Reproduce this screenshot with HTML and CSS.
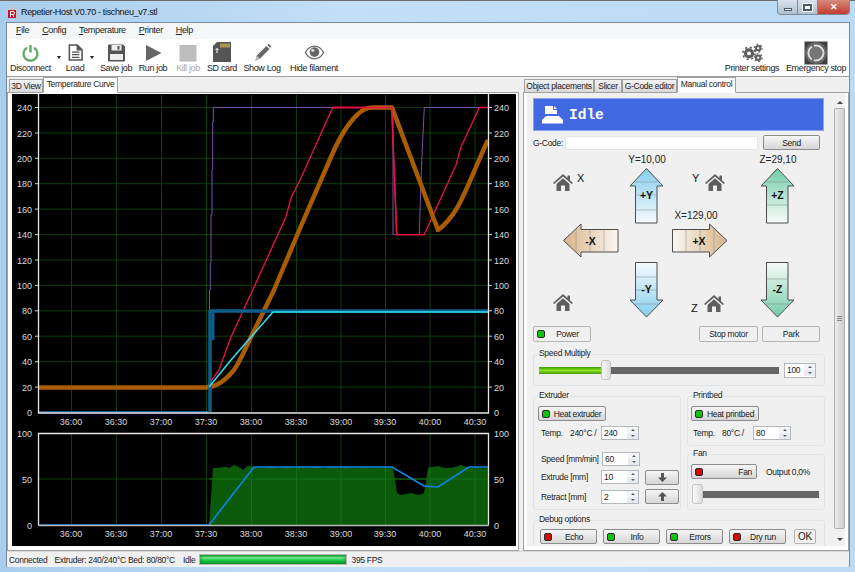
FILE: index.html
```html
<!DOCTYPE html>
<html lang="en">
<head>
    <meta charset="UTF-8">
    <meta name="viewport" content="width=device-width, initial-scale=1.0">
    <title>Repetier-Host V0.70 - tischneu_v7.stl</title>
    <link rel="stylesheet" href="styles.css">
</head>
<body>
<div class="window">
    <!-- title bar -->
    <div class="titlebar">
        <svg class="app-icon" width="12" height="12" viewBox="0 0 12 12"><path d="M6 0 L9 3 L11 3 L11 12 L1 12 L1 3 L3 3 Z" fill="#c9c9c9"/><rect x="2" y="4" width="8" height="8" fill="#c8102e"/><path d="M4.5 11V5.500h2.500a1.300 1.300 0 0 1 0 3h-2.500M6.800 8.500L8 11" fill="none" stroke="#fff" stroke-width="1"/></svg>
        <span class="title-text">Repetier-Host V0.70 - tischneu_v7.stl</span>
        <div class="win-buttons">
            <span class="win-btn win-min"><i></i></span>
            <span class="win-btn win-max"><i></i></span>
            <span class="win-btn win-close">✕</span>
        </div>
    </div>

    <div class="client">
        <div class="menubar">
            <span><u>F</u>ile</span>
            <span><u>C</u>onfig</span>
            <span><u>T</u>emperature</span>
            <span><u>P</u>rinter</span>
            <span><u>H</u>elp</span>
        </div>

        <div class="toolbar">
            <div class="tools-left">
                <div class="tool">
                    <svg class="ico-s" viewBox="0 0 24 24"><path d="M8 6.500 A8 8 0 1 0 16 6.500" fill="none" stroke="#5cae62" stroke-width="2.600"/><path d="M12 3.500V12" stroke="#5cae62" stroke-width="2.800"/></svg>
                    <span>Disconnect</span>
                    <b class="drop drop-a"></b>
                </div>
                <div class="tool">
                    <svg class="ico-s" viewBox="0 0 24 24"><path d="M5 3.500H14L19.500 9V20.500H5Z" fill="#fff" stroke="#555" stroke-width="1.800"/><path d="M14 3.500V9H19.500" fill="#555" stroke="#555" stroke-width="1.500"/><path d="M8 11.500H16.500M8 14.500H16.500M8 17.500H16.500" stroke="#555" stroke-width="1.400"/></svg>
                    <span>Load</span>
                    <b class="drop drop-b"></b>
                </div>
                <div class="tool">
                    <svg width="24" height="24" viewBox="0 0 24 24"><path d="M4.500 4H19L20.500 5.500V20H4.500Z" fill="#555" stroke="#555" stroke-linejoin="round"/><rect x="7.500" y="4" width="10" height="5.500" fill="#eee"/><rect x="13.500" y="5" width="2" height="3.500" fill="#555"/><rect x="6" y="13" width="13" height="6" fill="#eee"/></svg>
                    <span>Save job</span>
                </div>
                <div class="tool">
                    <svg width="24" height="24" viewBox="0 0 24 24"><path d="M5 4L20.500 12L5 20Z" fill="#666"/></svg>
                    <span>Run job</span>
                </div>
                <div class="tool tool-off">
                    <svg width="24" height="24" viewBox="0 0 24 24"><rect x="3.500" y="4" width="17" height="16.500" fill="#bdbdbd"/></svg>
                    <span>Kill job</span>
                </div>
                <div class="tool">
                    <svg width="24" height="24" viewBox="0 0 24 24"><path d="M7 1H21V21H3V5Z" fill="#555"/><path d="M11 2.500V6.500M13 2.500V6.500M15 2.500V6.500M17 2.500V6.500M19 2.500V6.500" stroke="#e2c24c" stroke-width="1.200"/><path d="M7 12V7.500M5.500 9L7 7.500L8.500 9" stroke="#fff" fill="none"/></svg>
                    <span>SD card</span>
                </div>
                <div class="tool">
                    <svg class="ico-s" viewBox="0 0 24 24"><path d="M4 21L5.500 15.500L16.500 4.500L20 8L9 19Z" fill="#666"/><path d="M17.500 3.500L19 2L22 5L20.500 6.500Z" fill="#666"/><path d="M4 21L5.500 15.500L9 19Z" fill="#bbb"/></svg>
                    <span>Show Log</span>
                </div>
                <div class="tool">
                    <svg class="ico-s" viewBox="0 0 24 24"><path d="M1.500 12C5 6 9 4.800 12 4.800S19 6 22.500 12C19 18 15 19.200 12 19.200S5 18 1.500 12Z" fill="#fff" stroke="#666" stroke-width="1.500"/><circle cx="12" cy="11.500" r="5.500" fill="#666"/><circle cx="10" cy="9.500" r="1.800" fill="#ddd"/></svg>
                    <span>Hide filament</span>
                </div>
            </div>
            <div class="tools-right">
                <div class="tool">
                    <svg class="ico-s" viewBox="0 0 24 24"><g fill="none" stroke="#5d5d5d"><circle cx="8" cy="13" r="4" stroke-width="3.600"/><circle cx="8" cy="13" r="7" stroke-width="1.800" stroke-dasharray="2.500 3"/><circle cx="18.500" cy="7" r="2.500" stroke-width="2.400"/><circle cx="18.500" cy="7" r="4.500" stroke-width="1.400" stroke-dasharray="2 2.700"/><circle cx="18.500" cy="18" r="2.500" stroke-width="2.400"/><circle cx="18.500" cy="18" r="4.500" stroke-width="1.400" stroke-dasharray="2 2.700"/></g></svg>
                    <span>Printer settings</span>
                </div>
                <div class="tool">
                    <svg width="24" height="24" viewBox="0 0 24 24"><rect x="0.500" y="0.500" width="23" height="23" fill="#3f3f3f"/><circle cx="12" cy="12" r="11" fill="#666"/><circle cx="12" cy="12" r="7.500" fill="none" stroke="#ddd" stroke-width="2" stroke-dasharray="14 2 15 2"/><circle cx="12" cy="12" r="6" fill="#777"/></svg>
                    <span>Emergency stop</span>
                </div>
            </div>
        </div>

        <div class="main">
            <!-- left: temperature curve -->
            <div class="left-pane">
                <div class="tabs tabs-left">
                    <span class="tab">3D View</span>
                    <span class="tab active">Temperature Curve</span>
                </div>
                <div class="tab-page curve-page">
                    <svg class="curve" width="504" height="452" viewBox="11 94 504 452">
                        <rect x="11" y="94" width="504" height="452" fill="#000"/>
                        <defs>
                            <clipPath id="topPlot"><rect x="38" y="95" width="449" height="318"/></clipPath>
                        </defs>
                        <!-- grid -->
                        <path class="grid" d="M38 107.500H487M38 133H487M38 158.300H487M38 183.700H487M38 209.100H487M38 234.600H487M38 260H487M38 285.400H487M38 310.800H487M38 336.200H487M38 361.700H487M38 387.100H487"/>
                        <path class="grid" d="M70.500 95V412M115.500 95V412M160.500 95V412M205.500 95V412M250.500 95V412M295.500 95V412M340 95V412M384.500 95V412M429 95V412M474 95V412"/>
                        <g clip-path="url(#topPlot)" fill="none" stroke-linejoin="round">
                            <path stroke="#7a52a8" stroke-width="1" d="M208.500 412V290H209.300V262.700H210V215H211V169H211.700V122H212.300V107.500H392V234.600H418.300L420 180L421.700 140L423.300 107.500H487"/>
                            <path stroke="#1d78b4" stroke-width="1.500" d="M38 412H207"/>
                            <path stroke="#f01048" stroke-width="1.300" d="M206 386.500L218 370L230 337L251.700 290L285 216.700L290 198L300 178L331.700 107.500H390.700L393.300 173L395.700 234.600H423.300L455 165L460 147L478.300 107.500H487"/>
                            <path stroke="#a95c00" stroke-width="4.500" d="M38 387.500H204C214 387.500 224 381 233 370C240 360 245 347 250 337L273 290L300 226L330 157C336 143 345 125 357 114C362 109 366 107.500 372 107.500H391L437 230C444 225 450 218 456 208C465 193 476 163 487 140"/>
                            <path stroke="#f01048" stroke-width="1.300" d="M331.700 107.500H390.700L393.300 173L395.700 234.600H423.300"/>
                            <path stroke="#0f5f8c" stroke-width="3.500" d="M209 412V311H487"/>
                            <path stroke="#0f5f8c" stroke-width="3" d="M212 340V311"/>
                            <path stroke="#2fe4f0" stroke-width="1.500" d="M208 387L230 360L250 337L272 312H487"/>
                        </g>
                        <!-- axes -->
                        <path class="axis" d="M37.500 94V413H487.500V94"/>
                        <path class="axis-tick" d="M34 107.500H37M34 133H37M34 158.300H37M34 183.700H37M34 209.100H37M34 234.600H37M34 260H37M34 285.400H37M34 310.800H37M34 336.200H37M34 361.700H37M34 387.100H37M488 107.500H491M488 133H491M488 158.300H491M488 183.700H491M488 209.100H491M488 234.600H491M488 260H491M488 285.400H491M488 310.800H491M488 336.200H491M488 361.700H491M488 387.100H491"/>
                        <g class="tick tick-end">
                            <text x="31" y="111">240</text><text x="31" y="136.500">220</text><text x="31" y="162">200</text><text x="31" y="187">180</text><text x="31" y="212.600">160</text><text x="31" y="238">140</text><text x="31" y="263.500">120</text><text x="31" y="289">100</text><text x="31" y="314.300">80</text><text x="31" y="339.700">60</text><text x="31" y="365.200">40</text><text x="31" y="390.600">20</text><text x="31" y="416">0</text>
                        </g>
                        <g class="tick">
                            <text x="493" y="111">240</text><text x="493" y="136.500">220</text><text x="493" y="162">200</text><text x="493" y="187">180</text><text x="493" y="212.600">160</text><text x="493" y="238">140</text><text x="493" y="263.500">120</text><text x="493" y="289">100</text><text x="493" y="314.300">80</text><text x="493" y="339.700">60</text><text x="493" y="365.200">40</text><text x="493" y="390.600">20</text><text x="493" y="416">0</text>
                        </g>
                        <g class="tick tick-mid">
                            <text x="70" y="425">36:00</text><text x="115" y="425">36:30</text><text x="160" y="425">37:00</text><text x="205" y="425">37:30</text><text x="250" y="425">38:00</text><text x="295" y="425">38:30</text><text x="340" y="425">39:00</text><text x="384" y="425">39:30</text><text x="429" y="425">40:00</text><text x="474" y="425">40:30</text>
                        </g>

                        <!-- extruder output -->
                        <path class="grid" d="M38 479H487M70.500 433V525M115.500 433V525M160.500 433V525M205.500 433V525M250.500 433V525M295.500 433V525M340 433V525M384.500 433V525M429 433V525M474 433V525"/>
                        <path fill="#0a5a0a" d="M208 525L212 468L220 467.500L225 466.700L228 468L233 465L238 467L242 470L247 465.500L253 467L262 468L270 466.500L278 468L285 466.500L293 468L300 466.500L308 468L316 466L322 468.500L330 466.500L338 468L345 466.500L352 468L362 467L372 468L380 467.500L392 467.700L396 493L400 495L410 493L417 495L423 493L427 468L437 466L443 468L452 467.500L460 465L468 468L476 467L482 468.500L487 467.700V525Z"/>
                        <path class="grid grid-over" d="M250.500 467V525M295.500 467V525M340 467V525M384.500 467V525M429 467V525M474 467V525M208 479H487"/>
                        <path fill="none" stroke="#0e86e6" stroke-width="1.600" d="M38 525H208L253 467H391L423 486L437 487L468 467H487"/>
                        <path class="axis" d="M37.500 525.500V433.500H487.500V525.500"/>
                        <path class="axis axis-dim" d="M37.500 525.500H487.500"/>
                        <g class="tick tick-end">
                            <text x="31" y="436.500">100</text><text x="31" y="482.500">50</text><text x="31" y="528.500">0</text>
                        </g>
                        <g class="tick">
                            <text x="493" y="436.500">100</text><text x="493" y="482.500">50</text><text x="493" y="528.500">0</text>
                        </g>
                        <g class="tick tick-mid">
                            <text x="70" y="537">36:00</text><text x="115" y="537">36:30</text><text x="160" y="537">37:00</text><text x="205" y="537">37:30</text><text x="250" y="537">38:00</text><text x="295" y="537">38:30</text><text x="340" y="537">39:00</text><text x="384" y="537">39:30</text><text x="429" y="537">40:00</text><text x="474" y="537">40:30</text>
                        </g>
                    </svg>
                </div>
            </div>

            <!-- right: manual control -->
            <div class="right-pane">
                <div class="tabs tabs-right">
                    <span class="tab tab-obj">Object placements</span>
                    <span class="tab tab-slicer">Slicer</span>
                    <span class="tab tab-gcode">G-Code editor</span>
                    <span class="tab active tab-manual">Manual control</span>
                </div>
                <div class="tab-page manual-page">
                    <div class="manual">
                        <div class="state-bar">
                            <svg width="23" height="19" viewBox="0 0 23 19"><path d="M4 1H13L16 4V9H4Z" fill="#fff"/><path d="M12.500 1V4.500H16" fill="none" stroke="#4169e1"/><path d="M5 11H18L22 15V18.500H1V15Z" fill="#fff"/></svg>
                            <span>Idle</span>
                        </div>
                        <div class="gcode-row">
                            <label>G-Code:</label>
                            <input type="text" class="gcode-input">
                            <button class="btn btn-send">Send</button>
                        </div>

                        <svg class="jog" width="300" height="172" viewBox="533 150 300 172">
                            <defs>
                                <linearGradient id="gradBlueUp" x1="0" y1="0" x2="0" y2="1"><stop offset="0" stop-color="#86cdee"/><stop offset="1" stop-color="#f6fbfe"/></linearGradient>
                                <linearGradient id="gradBlueDown" x1="0" y1="1" x2="0" y2="0"><stop offset="0" stop-color="#86cdee"/><stop offset="1" stop-color="#f6fbfe"/></linearGradient>
                                <linearGradient id="gradGreenUp" x1="0" y1="0" x2="0" y2="1"><stop offset="0" stop-color="#72cba8"/><stop offset="1" stop-color="#f8fcfa"/></linearGradient>
                                <linearGradient id="gradGreenDown" x1="0" y1="1" x2="0" y2="0"><stop offset="0" stop-color="#72cba8"/><stop offset="1" stop-color="#f8fcfa"/></linearGradient>
                                <linearGradient id="gradTanLeft" x1="0" y1="0" x2="1" y2="0"><stop offset="0" stop-color="#d8b488"/><stop offset="1" stop-color="#fbf7f1"/></linearGradient>
                                <linearGradient id="gradTanRight" x1="1" y1="0" x2="0" y2="0"><stop offset="0" stop-color="#d8b488"/><stop offset="1" stop-color="#fbf7f1"/></linearGradient>
                                <symbol id="home" viewBox="0 0 20 17">
                                    <path d="M10 0L14.500 4V1.500H17V6.300L20 9L18.800 10L10 2.500L1.200 10L0 9Z" fill="#5f5f5f"/>
                                    <path d="M3.500 10L10 4.300L16.500 10V17H12V11.500H8V17H3.500Z" fill="#5f5f5f"/>
                                </symbol>
                            </defs>
                            <use href="#home" x="553" y="173" width="20" height="17"/>
                            <use href="#home" x="705" y="173" width="20" height="17"/>
                            <use href="#home" x="553" y="293" width="20" height="17"/>
                            <use href="#home" x="704" y="294" width="20" height="17"/>
                            <text class="jog-axis" x="577" y="181">X</text>
                            <text class="jog-axis" x="692" y="181">Y</text>
                            <text class="jog-axis" x="691" y="311">Z</text>
                            <text class="jog-pos" x="647" y="162">Y=10,00</text>
                            <text class="jog-pos" x="778" y="162">Z=29,10</text>
                            <text class="jog-pos" x="696" y="218">X=129,00</text>

                            <path class="arrow" fill="url(#gradBlueUp)" d="M646.500 167.500L663 185H657V222H635.500V185H630Z"/>
                            <path class="band" d="M635 181H658M635.500 194H657M635.500 209H657"/>
                            <text class="jog-lbl" x="646.500" y="198">+Y</text>

                            <path class="arrow" fill="url(#gradGreenUp)" d="M777.500 167.500L794 185H788V222H766.500V185H761Z"/>
                            <path class="band" d="M766 181H789M766.500 204H788"/>
                            <text class="jog-lbl" x="777.500" y="198">+Z</text>

                            <path class="arrow" fill="url(#gradBlueDown)" d="M646.500 316L663 299H657V261.500H635.500V299H630Z"/>
                            <path class="band" d="M635.500 276H657M635.500 289H657M635 303H658"/>
                            <text class="jog-lbl" x="646.500" y="292">-Y</text>

                            <path class="arrow" fill="url(#gradGreenDown)" d="M777.500 316L794 299H788V261.500H766.500V299H761Z"/>
                            <path class="band" d="M766.500 278H788M766 303H789"/>
                            <text class="jog-lbl" x="777.500" y="292">-Z</text>

                            <path class="arrow" fill="url(#gradTanLeft)" d="M563.500 239.500L581 223V228.500H618V251H581V256Z"/>
                            <path class="band" d="M576 228V251M590 228.500V251M604 228.500V251"/>
                            <text class="jog-lbl" x="590.500" y="243.500">-X</text>

                            <path class="arrow" fill="url(#gradTanRight)" d="M727 239.500L709.500 223V228.500H672.500V251H709.500V256Z"/>
                            <path class="band" d="M686 228.500V251M700 228.500V251M714 228V251"/>
                            <text class="jog-lbl" x="699" y="243.500">+X</text>
                        </svg>

                        <div class="motor-row">
                            <button class="btn btn-flat btn-led btn-power"><i class="led led-on"></i><span>Power</span></button>
                            <button class="btn btn-flat btn-stop">Stop motor</button>
                            <button class="btn btn-flat btn-park">Park</button>
                        </div>

                        <div class="group group-speed">
                            <span class="legend">Speed Multiply</span>
                            <div class="slider">
                                <i class="track-on"></i><i class="thumb"></i><i class="track-off"></i>
                            </div>
                            <div class="spin spin-speed"><span>100</span><i></i></div>
                        </div>

                        <div class="heat-row">
                            <div class="group group-extruder">
                                <span class="legend">Extruder</span>
                                <button class="btn btn-led btn-heat"><i class="led led-on"></i><span>Heat extruder</span></button>
                                <div class="line line-temp">
                                    <span class="lbl-temp">Temp.</span><span class="lbl-val">240°C /</span>
                                    <div class="spin"><span>240</span><i></i></div>
                                </div>
                                <div class="line line-speed">
                                    <span class="lbl-wide">Speed [mm/min]</span>
                                    <div class="spin"><span>60</span><i></i></div>
                                </div>
                                <div class="line line-extrude">
                                    <span class="lbl-wide">Extrude [mm]</span>
                                    <div class="spin"><span>10</span><i></i></div>
                                    <button class="btn btn-move">
                                        <svg width="11" height="11" viewBox="0 0 11 11"><path d="M4 1H7V5.500H10L5.500 10L1 5.500H4Z" fill="#555"/></svg>
                                    </button>
                                </div>
                                <div class="line line-retract">
                                    <span class="lbl-wide">Retract [mm]</span>
                                    <div class="spin"><span>2</span><i></i></div>
                                    <button class="btn btn-move">
                                        <svg width="11" height="11" viewBox="0 0 11 11"><path d="M4 10H7V5.500H10L5.500 1L1 5.500H4Z" fill="#555"/></svg>
                                    </button>
                                </div>
                            </div>
                            <div class="heat-side">
                                <div class="group group-bed">
                                    <span class="legend">Printbed</span>
                                    <button class="btn btn-led btn-heat"><i class="led led-on"></i><span>Heat printbed</span></button>
                                    <div class="line line-bed">
                                        <span class="lbl-temp">Temp.</span><span class="lbl-val">80°C /</span>
                                        <div class="spin"><span>80</span><i></i></div>
                                    </div>
                                </div>
                                <div class="group group-fan">
                                    <span class="legend">Fan</span>
                                    <div class="line line-fan">
                                        <button class="btn btn-led btn-fan"><i class="led led-off"></i><span>Fan</span></button>
                                        <span class="fan-out">Output 0,0%</span>
                                    </div>
                                    <div class="slider slider-fan">
                                        <i class="thumb"></i><i class="track-off"></i>
                                    </div>
                                </div>
                            </div>
                        </div>

                        <div class="group group-debug">
                            <span class="legend">Debug options</span>
                            <div class="debug-row">
                                <button class="btn btn-led"><i class="led led-off"></i><span>Echo</span></button>
                                <button class="btn btn-led"><i class="led led-on"></i><span>Info</span></button>
                                <button class="btn btn-led"><i class="led led-on"></i><span>Errors</span></button>
                                <button class="btn btn-led"><i class="led led-off"></i><span>Dry run</span></button>
                                <button class="btn btn-flat btn-ok">OK</button>
                            </div>
                        </div>
                    </div>
                    <div class="vscroll">
                        <b class="up"></b>
                        <div class="vthumb"><i></i></div>
                        <b class="down"></b>
                    </div>
                </div>
            </div>
        </div>

        <div class="statusbar">
            <span class="st-conn">Connected</span>
            <span class="st-temp">Extruder: 240/240°C Bed: 80/80°C</span>
            <span class="st-idle">Idle</span>
            <div class="progress"></div>
            <span class="st-fps">395 FPS</span>
        </div>
    </div>
</div>
</body>
</html>
```

FILE: styles.css
```css
* {
    box-sizing: border-box;
}
html, body {
    margin: 0;
    height: 100%;
    overflow: hidden;
}
body {
    font-family: "Liberation Sans", Arial, sans-serif;
    font-size: 8.500px;
    letter-spacing: -0.300px;
    color: #222;
}
svg {
    display: block;
}
.window {
    width: 855px;
    height: 572px;
    padding: 0 5px 5px 6px;
    background: linear-gradient(90deg, #a9cdec, #c3dff7 40%, #bcdaf4);
    border-top: 1px solid #6d6d6d;
}

/* title bar */
.titlebar {
    display: flex;
    align-items: center;
    height: 21px;
    position: relative;
}
.app-icon {
    margin: 0 3px 0 0;
}
.title-text {
    font-size: 9px;
    letter-spacing: -0.350px;
    color: #111;
}
.win-buttons {
    position: absolute;
    top: -1px;
    right: 0;
    display: flex;
    height: 15px;
    border: 1px solid #7e8a97;
    border-top: none;
    border-radius: 0 0 4px 4px;
    overflow: hidden;
}
.win-btn {
    display: flex;
    align-items: center;
    justify-content: center;
    height: 14px;
    width: 20px;
    background: linear-gradient(#d8e3ee, #aebfd0);
    border-right: 1px solid #7e8a97;
}
.win-min i {
    width: 8px;
    height: 3px;
    margin-top: 5px;
    background: #fff;
    border: 1px solid #4e5a68;
}
.win-max i {
    width: 9px;
    height: 7px;
    background: #fff;
    border: 2px solid #4e5a68;
    outline: 1px solid #fff;
}
.win-close {
    width: 31px;
    color: #fff;
    font-size: 9px;
    font-weight: bold;
    background: linear-gradient(#d98a7e, #c23c2e);
    border-right: none;
}
.client {
    height: 545px;
    background: #f0f0f0;
    display: flex;
    flex-direction: column;
    border: 1px solid #7a8a9a;
    border-bottom: none;
}

/* menu */
.menubar {
    display: flex;
    height: 16px;
    align-items: center;
    padding: 0 0 2px 9px;
    gap: 13px;
    background: #f5f6f7;
    font-size: 9px;
    letter-spacing: -0.350px;
}

/* toolbar */
.toolbar {
    display: flex;
    justify-content: space-between;
    height: 38px;
    background: #fff;
    border-bottom: 1px solid #a0a0a0;
    padding-right: 1px;
}
.tools-left {
    display: grid;
    grid-template-columns: 47px 42px 40px 34px 36px 32px 48px 56px;
}
.tools-right {
    display: grid;
    grid-template-columns: 64px 64px;
}
.tool {
    position: relative;
    display: flex;
    flex-direction: column;
    align-items: center;
    white-space: nowrap;
    padding-top: 2px;
    font-size: 9px;
    letter-spacing: -0.350px;
}
.tool span {
    margin-top: -2px;
    line-height: 11px;
}
.ico-s {
    width: 21px;
    height: 21px;
    margin: 1px 0 2px;
}
.tool-off {
    color: #a8a8a8;
}
.drop {
    position: absolute;
    top: 17px;
    border-top: 3px solid #222;
    border-left: 2px solid transparent;
    border-right: 2px solid transparent;
}
.drop-a {
    left: 50px;
}
.drop-b {
    left: 36px;
}

/* panes */
.main {
    flex: 1;
    display: flex;
    justify-content: space-between;
    min-height: 0;
}
.left-pane {
    width: 512px;
    display: flex;
    flex-direction: column;
}
.right-pane {
    width: 326px;
    display: flex;
    flex-direction: column;
}
.tabs {
    display: flex;
    align-items: flex-end;
    height: 15px;
    position: relative;
    z-index: 1;
}
.tabs-left {
    padding-left: 2px;
}
.tabs-right {
    padding-left: 1px;
}
.tab {
    display: flex;
    align-items: center;
    justify-content: center;
    height: 14px;
    padding: 0 3px;
    margin-bottom: -1px;
    background: linear-gradient(#f2f2f2, #d9d9d9);
    border: 1px solid #a0a0a0;
    white-space: nowrap;
}
.tab.active {
    height: 16px;
    padding: 0 4px 2px;
    background: #fff;
    border-bottom-color: #fff;
}
.tabs-left .tab:first-child {
    width: 34px;
}
.tabs-left .tab.active {
    width: 75px;
}
.tab-obj {
    width: 70px;
}
.tab-slicer {
    width: 28px;
}
.tab-gcode {
    width: 55px;
}
.tab-manual {
    width: 59px;
}
.tab-page {
    flex: 1;
    background: #fff;
    border: 1px solid #a0a0a0;
    min-height: 0;
}
.curve-page {
    padding: 1px 0 0 4px;
}

/* curves */
.grid {
    fill: none;
    stroke: #0d3d0d;
    stroke-width: 1;
}
.grid-over {
    stroke: #127012;
}
.axis {
    fill: none;
    stroke: #e6e6e6;
    stroke-width: 1.300;
}
.axis-dim {
    stroke: #b5b5b5;
}
.axis-tick {
    fill: none;
    stroke: #cfcfcf;
    stroke-width: 1;
}
.tick {
    font-family: "Liberation Sans", Arial, sans-serif;
    font-size: 9px;
    letter-spacing: 0;
    fill: #dcdcdc;
}
.tick-end {
    text-anchor: end;
}
.tick-mid {
    text-anchor: middle;
}

/* manual control */
.manual-page {
    display: flex;
    padding: 0 3px 5px 3px;
}
.manual {
    width: 307px;
    height: 453px;
    padding: 5px 0 0 6px;
    background: #f0f0f0;
    overflow: hidden;
    flex-shrink: 0;
}
.state-bar {
    display: flex;
    align-items: center;
    gap: 5px;
    width: 291px;
    height: 33px;
    padding-left: 7px;
    background: #4169e1;
    border: 1px solid #8fa3e8;
    color: #fff;
    font-family: "Liberation Mono", "Courier New", monospace;
    font-weight: bold;
    font-size: 14.500px;
    letter-spacing: 0;
}
.gcode-row {
    display: flex;
    align-items: center;
    height: 15px;
    margin-top: 4px;
}
.gcode-row label {
    width: 32px;
    white-space: nowrap;
}
.gcode-input {
    width: 193px;
    height: 14px;
    margin: 0;
    padding: 0;
    background: #fff;
    border: 1px solid #e4e4e4;
    border-radius: 2px;
}
.btn {
    margin: 0;
    padding: 0;
    height: 15px;
    font-family: "Liberation Sans", Arial, sans-serif;
    font-size: 8.500px;
    letter-spacing: -0.300px;
    color: #222;
    background: linear-gradient(#f6f6f6, #d6d6d6);
    border: 1px solid #8c8c8c;
    border-radius: 2px;
}
.btn-flat {
    background: #f0f0f0;
    border-color: #b4b4b4;
}
.btn-send {
    width: 57px;
    margin-left: 5px;
}
.jog {
    margin-top: 1px;
}
.arrow {
    stroke: #4c4c4c;
    stroke-width: 1;
}
.band {
    fill: none;
    stroke: #8a8a8a;
    stroke-opacity: 0.500;
}
.jog-lbl {
    font-family: "Liberation Sans", Arial, sans-serif;
    font-size: 10.500px;
    font-weight: bold;
    letter-spacing: 0;
    fill: #111;
    text-anchor: middle;
}
.jog-pos {
    font-family: "Liberation Sans", Arial, sans-serif;
    font-size: 10px;
    letter-spacing: 0;
    fill: #222;
    text-anchor: middle;
}
.jog-axis {
    font-family: "Liberation Sans", Arial, sans-serif;
    font-size: 11px;
    letter-spacing: 0;
    fill: #111;
}
.motor-row {
    display: flex;
    margin-top: 3px;
    height: 16px;
}
.motor-row .btn {
    height: 16px;
}
.btn-power {
    width: 58px;
}
.btn-stop {
    width: 59px;
    margin-left: 108px;
}
.btn-park {
    width: 58px;
    margin-left: 4px;
}
.btn-led {
    display: flex;
    align-items: center;
    padding-left: 3px;
}
.btn-led span {
    margin: 0 auto;
}
.led {
    flex-shrink: 0;
    width: 8px;
    height: 8px;
    border: 1px solid #2b2b2b;
    border-radius: 2px;
}
.led-on {
    background: #0bc40b;
}
.led-off {
    background: #d20a0a;
}

/* groups */
.group {
    position: relative;
    border: 1px solid #dfe3e7;
    border-radius: 3px;
}
.legend {
    position: absolute;
    top: -7px;
    left: 4px;
    line-height: 11px;
    background: #f0f0f0;
    padding: 0 1px;
}
.group-speed {
    display: flex;
    align-items: center;
    width: 292px;
    height: 32px;
    margin-top: 12px;
    padding-left: 5px;
}
.slider {
    display: flex;
    align-items: center;
}
.slider i {
    display: block;
}
.track-on {
    width: 62px;
    height: 7px;
    background: linear-gradient(#3d9a0b, #8fe01e 50%, #3d9a0b);
}
.track-off {
    width: 168px;
    height: 7px;
    background: #666;
}
.thumb {
    width: 10px;
    height: 20px;
    background: linear-gradient(90deg, #fafafa, #dcdcdc);
    border: 1px solid #c4c4c4;
    border-radius: 3px;
}
.spin {
    display: flex;
    flex-shrink: 0;
    align-items: center;
    justify-content: space-between;
    width: 38px;
    height: 14px;
    padding-left: 2px;
    background: #fff;
    border: 1px solid #b5b9bf;
}
/* up and down buttons of the number box */
.spin i {
    display: flex;
    flex-direction: column;
    align-items: center;
    justify-content: space-around;
    width: 11px;
    height: 12px;
    background: linear-gradient(#f2f4f7 48%, #b8c0ca 48%, #b8c0ca 54%, #e8ecf0 54%);
}
.spin i::before, .spin i::after {
    content: "";
    border-left: 2px solid transparent;
    border-right: 2px solid transparent;
}
.spin i::before {
    border-bottom: 2px solid #54626f;
}
.spin i::after {
    border-top: 2px solid #54626f;
}
.spin-speed {
    width: 32px;
    height: 15px;
    margin-left: 5px;
}
.heat-row {
    display: flex;
    gap: 6px;
    margin-top: 10px;
}
.group-extruder {
    width: 148px;
    height: 114px;
    padding-top: 9px;
}
.heat-side {
    display: flex;
    flex-direction: column;
    gap: 8px;
}
.group-bed {
    width: 138px;
    height: 50px;
    padding-top: 9px;
}
.group-fan {
    width: 138px;
    height: 56px;
    padding-top: 9px;
}
.btn-heat {
    width: 68px;
}
.group-extruder .btn-heat {
    margin-left: 4px;
}
.group-bed .btn-heat {
    margin-left: 3px;
}
.line {
    display: flex;
    align-items: center;
}
.line-temp {
    margin-top: 5px;
    padding-left: 7px;
}
.line-bed {
    margin-top: 5px;
    padding-left: 5px;
}
.lbl-temp {
    width: 29px;
}
.lbl-val {
    width: 31px;
}
.lbl-wide {
    width: 60px;
    white-space: nowrap;
}
.line-speed {
    margin-top: 12px;
    padding-left: 7px;
}
.line-speed .spin {
    margin-left: 1px;
}
.line-extrude {
    margin-top: 4px;
    padding-left: 7px;
    height: 14px;
}
.line-retract {
    margin-top: 5px;
    padding-left: 7px;
}
.btn-move {
    display: flex;
    align-items: center;
    justify-content: center;
    width: 34px;
    margin-left: 6px;
}
.line-fan {
    padding-left: 3px;
}
.btn-fan {
    width: 66px;
}
.btn-fan span {
    margin: 0 4px 0 auto;
}
.fan-out {
    margin-left: 9px;
    white-space: nowrap;
}
.slider-fan {
    margin: 5px 0 0 4px;
}
.slider-fan .track-off {
    width: 116px;
}
.slider-fan .thumb {
    width: 11px;
}
.group-debug {
    width: 292px;
    height: 40px;
    margin-top: 10px;
    padding-top: 8px;
}
.debug-row {
    display: flex;
    gap: 6px;
    padding-left: 6px;
}
.debug-row .btn-led {
    width: 57px;
}
.btn-ok {
    width: 22px;
    margin-left: 2px;
    font-size: 10px;
}

/* scrollbar */
.vscroll {
    position: relative;
    width: 12px;
    height: 453px;
    background: #f0f0f0;
    display: flex;
    flex-direction: column;
    align-items: center;
}
.up, .down {
    display: block;
    width: 0;
    border-left: 3px solid transparent;
    border-right: 3px solid transparent;
}
.up {
    margin-top: 8px;
    border-bottom: 3px solid #444;
}
.down {
    margin-top: 9px;
    border-top: 3px solid #444;
}
.vthumb {
    width: 11px;
    height: 421px;
    margin-top: 4px;
    display: flex;
    align-items: center;
    justify-content: center;
    background: linear-gradient(90deg, #ececec, #cfcfcf);
    border: 1px solid #b0b0b0;
    border-radius: 2px;
}
.vthumb i {
    width: 5px;
    height: 5px;
    background: repeating-linear-gradient(#888 0 1px, transparent 1px 2px);
}

/* status bar */
.statusbar {
    display: flex;
    align-items: center;
    height: 16px;
    background: #f0f0f0;
    padding-left: 2px;
    border-top: 1px solid #d8d8d8;
}
.st-temp {
    margin-left: 7px;
}
.st-idle {
    margin-left: 8px;
}
.progress {
    width: 148px;
    height: 11px;
    margin: 0 4px 0 4px;
    background: linear-gradient(#0aa52e, #86f09a 30%, #1fd04a 55%, #0c9a2c);
    border: 1px solid #b8b8b8;
    box-shadow: inset 0 0 4px #0a8a2a;
}
```
